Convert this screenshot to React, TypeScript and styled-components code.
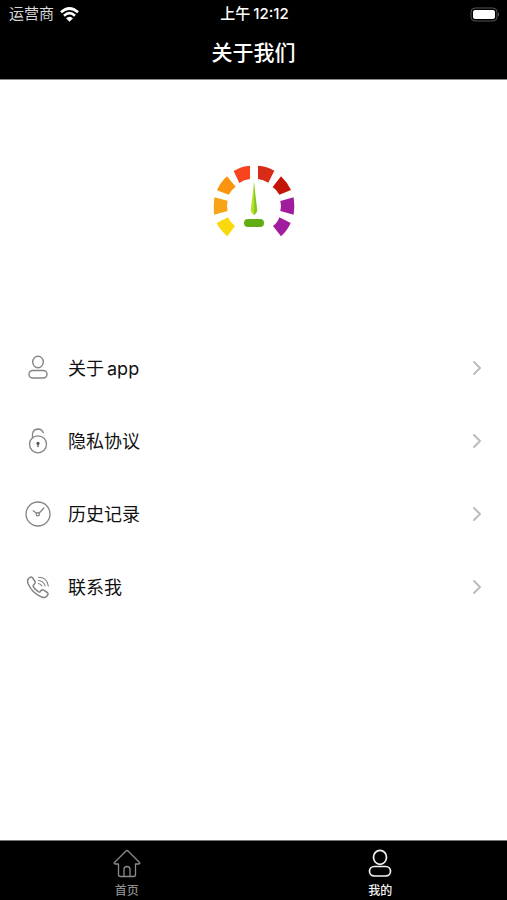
import React from "react";
import styled, { createGlobalStyle } from "styled-components";

const GlobalStyle = createGlobalStyle`
  *, *::before, *::after { box-sizing: border-box; }
  body {
    margin: 0;
    background: #fff;
    color: #111;
    font-family: Inter, "Noto Sans CJK SC", sans-serif;
  }
`;

const Screen = styled.div`
  min-height: 100vh;
  display: flex;
  flex-direction: column;
`;

const TopBar = styled.header`
  background: #000;
  color: #fff;
  border-bottom: 1px solid #8a8a8a;
`;

const StatusBar = styled.div`
  height: 28px;
  padding: 0 7px 0 9px;
  display: grid;
  grid-template-columns: 1fr auto 1fr;
  align-items: center;
`;

const Carrier = styled.div`
  display: flex;
  align-items: center;
  gap: 6px;
  font-size: 15px;
  line-height: 20px;
  color: #d8d8d8;
`;

const Clock = styled.time`
  display: flex;
  gap: 3px;
  font-size: 15px;
  line-height: 20px;
  font-weight: 500;
`;

const BatteryIcon = styled.svg`
  justify-self: end;
`;

const Title = styled.h1`
  margin: 0;
  height: 51px;
  font-size: 21px;
  line-height: 50px;
  font-weight: 500;
  text-align: center;
`;

const Content = styled.main`
  flex: 1;
`;

const LogoArea = styled.div`
  padding: 85px 0 94px;
  display: flex;
  justify-content: center;
`;

const Menu = styled.ul`
  list-style: none;
  margin: 0;
  padding: 0;
`;

const MenuButton = styled.button`
  width: 100%;
  height: 73px;
  padding: 0 24px;
  display: flex;
  align-items: center;
  gap: 16px;
  border: 0;
  background: transparent;
  color: inherit;
  font: inherit;
  font-size: 18px;
  line-height: 28px;
  text-align: left;
  cursor: pointer;
`;

const MenuLabel = styled.span`
  flex: 1;
  display: flex;
  gap: 3px;
  padding-top: 2px;
`;

const TabBar = styled.nav`
  height: 60px;
  display: flex;
  background: #000;
  border-top: 1px solid #777;
`;

const Tab = styled.a<{ $active?: boolean }>`
  flex: 1;
  display: flex;
  flex-direction: column;
  align-items: center;
  padding-top: 7px;
  gap: 5px;
  color: ${(p) => (p.$active ? "#f2f2f2" : "#8c8c8c")};
  font-size: 12px;
  line-height: 16px;
  font-weight: 500;
  text-decoration: none;
`;

const LineIcon = styled.svg<{ $color?: string }>`
  flex: none;
  fill: none;
  stroke: ${(p) => p.$color ?? "currentColor"};
  stroke-linecap: round;
  stroke-linejoin: round;
`;

const GREY = "#858585";

const Wifi = () => (
  <svg width="19" height="15" viewBox="0 0 57 45" fill="none" stroke="#fff" strokeWidth="8" aria-hidden="true">
    <path d="M3 16Q28.500 -7 54 16" />
    <path d="M12 26Q28.500 11 45 26" />
    <path d="M18 34Q28.500 25 39 34L28.500 44Z" fill="#fff" stroke="none" />
  </svg>
);

const Battery = () => (
  <BatteryIcon width="30" height="15" viewBox="0 0 30 15" role="img" aria-label="电池">
    <rect x="1" y="1" width="26" height="13" rx="4" fill="none" stroke="#555" />
    <rect x="3" y="3" width="22" height="9" rx="2" fill="#fff" />
    <path d="M28 5.500Q30 7.500 28 9.500Z" fill="#666" />
  </BatteryIcon>
);

const GaugeLogo = () => (
  <svg width="82" height="72" viewBox="27 27 246 216" role="img" aria-label="logo">
    <defs>
      <linearGradient id="needle" x1="0" x2="1">
        <stop offset="0.45" stopColor="#b8e02c" />
        <stop offset="0.55" stopColor="#86c81c" />
      </linearGradient>
    </defs>
    <path d="M70 241Q49 223 38 201L72 184Q79 200 93 210Z" fill="#fbd80c" />
    <path d="M30 176Q28 150 31 124L71 134Q67 150 71 165Z" fill="#f9a417" />
    <path d="M39 103Q50 78 69 61L95 92Q81 102 74 116Z" fill="#fb940f" />
    <path d="M89 45Q112 30 138 29V69Q120 71 106 81Z" fill="#f8431f" />
    <path d="M162 29Q189 30 211 44L193 80Q178 71 162 69Z" fill="#d92c18" />
    <path d="M231 61Q250 79 261 102L226 116Q219 102 206 93Z" fill="#c41608" />
    <path d="M269 124Q273 150 269 176L229 165Q233 150 229 135Z" fill="#a01d9d" />
    <path d="M260 201Q250 224 231 241L207 210Q221 200 226 184Z" fill="#a01d9d" />
    <path d="M150 76Q154 118 160 163Q159 173 150 177Q141 173 140 163Q146 118 150 76Z" fill="url(#needle)" />
    <rect x="120" y="189" width="60" height="24" rx="12" fill="#62ad14" />
  </svg>
);

const PersonIcon = ({ color }: { color?: string }) => (
  <LineIcon width="28" height="28" viewBox="0 0 28 28" strokeWidth="1.400" $color={color} aria-hidden="true">
    <ellipse cx="14" cy="8" rx="5.300" ry="5.800" />
    <rect x="5" y="16.500" width="18" height="7.500" rx="3.750" />
  </LineIcon>
);

const TabPersonIcon = () => (
  <LineIcon width="28" height="30" viewBox="0 0 28 30" strokeWidth="1.700" aria-hidden="true">
    <ellipse cx="14" cy="9.300" rx="6.500" ry="7" />
    <rect x="3.500" y="18.500" width="21" height="9.500" rx="4.700" />
  </LineIcon>
);

const HomeIcon = () => (
  <LineIcon width="28" height="30" viewBox="0 0 28 30" strokeWidth="1.300" aria-hidden="true">
    <path d="M5.500 16H2Q.500 15.500 1.500 14.500L13 3Q14 2 15 3L26.500 14.500Q27.500 15.500 26 16H22.500V26.500Q22.500 28.500 20.500 28.500H7.500Q5.500 28.500 5.500 26.500Z" />
    <path d="M11 28V21.500Q11 18.500 14 18.500T17 21.500V28" />
  </LineIcon>
);

const LockIcon = () => (
  <LineIcon width="28" height="28" viewBox="0 0 28 28" strokeWidth="1.300" $color={GREY} aria-hidden="true">
    <circle cx="14" cy="17.300" r="8.500" />
    <path d="M8.500 10.800V7Q9 2.300 14 2Q18 2 19.300 5.800" />
    <circle cx="14" cy="16.300" r="1" fill="#555" stroke="#555" />
    <path d="M14 17V19.500" stroke="#555" />
  </LineIcon>
);

const HistoryIcon = () => (
  <LineIcon width="28" height="28" viewBox="0 0 28 28" strokeWidth="1.300" $color={GREY} aria-hidden="true">
    <circle cx="14" cy="14" r="12" />
    <path d="M9.200 10.800L12.600 13.300M15 13.300L19.800 8" />
    <circle cx="13.800" cy="14.300" r="1.600" />
  </LineIcon>
);

const PhoneIcon = () => (
  <LineIcon width="28" height="28" viewBox="0 0 28 28" strokeWidth="1.500" $color={GREY} aria-hidden="true">
    <path d="M6 4.300Q7.500 3.500 8.700 5L11 8.500Q11.700 10 10.500 11L9.300 12.200Q8.700 13 9.500 14Q11.500 17 14.500 18.800Q15.500 19.300 16.200 18.600L17.300 17.300Q18.400 16.500 19.700 17.200L23.300 19.500Q24.700 20.500 23.700 22L22.500 23.500Q20.500 25.200 17.500 24Q8 20 4 10.500Q3 7 4.500 5.500Z" />
    <path d="M14.500 4.300Q23 4.300 24.300 13M14.300 7.500Q20 7.800 21 13M14.300 10.500Q17.200 10.800 17.800 13" strokeWidth="1.100" />
  </LineIcon>
);

const Chevron = () => (
  <LineIcon width="12" height="16" viewBox="0 0 12 16" strokeWidth="2" $color="#bdbdbd" aria-hidden="true">
    <path d="M3 2L9 8L3 14" />
  </LineIcon>
);

const items = [
  { words: ["关于", "app"], icon: <PersonIcon color={GREY} /> },
  { words: ["隐私协议"], icon: <LockIcon /> },
  { words: ["历史记录"], icon: <HistoryIcon /> },
  { words: ["联系我"], icon: <PhoneIcon /> },
];

export default function App() {
  return (
    <Screen>
      <GlobalStyle />
      <TopBar>
        <StatusBar>
          <Carrier>
            运营商
            <Wifi />
          </Carrier>
          <Clock>
            <span>上午</span>
            <span>12:12</span>
          </Clock>
          <Battery />
        </StatusBar>
        <Title>关于我们</Title>
      </TopBar>
      <Content>
        <LogoArea>
          <GaugeLogo />
        </LogoArea>
        <Menu>
          {items.map(({ words, icon }) => (
            <li key={words[0]}>
              <MenuButton type="button">
                {icon}
                <MenuLabel>
                  {words.map((word) => (
                    <span key={word}>{word}</span>
                  ))}
                </MenuLabel>
                <Chevron />
              </MenuButton>
            </li>
          ))}
        </Menu>
      </Content>
      <TabBar>
        <Tab href="#home">
          <HomeIcon />
          首页
        </Tab>
        <Tab href="#mine" $active aria-current="page">
          <TabPersonIcon />
          我的
        </Tab>
      </TabBar>
    </Screen>
  );
}
